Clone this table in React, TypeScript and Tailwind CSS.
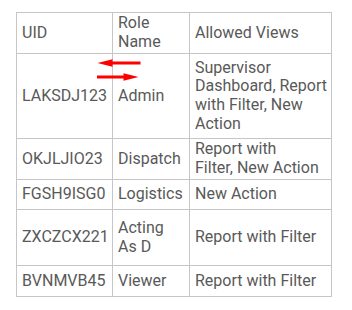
import React from "react";

type Row = {
  uid: string;
  role: string[];
  views: string[];
  h: string;
};

const rows: Row[] = [
  { uid: "UID", role: ["Role", "Name"], views: ["Allowed Views"], h: "h-[41px]" },
  {
    uid: "LAKSDJ123",
    role: ["Admin"],
    views: ["Supervisor", "Dashboard, Report", "with Filter, New", "Action"],
    h: "h-[85px]",
  },
  { uid: "OKJLJIO23", role: ["Dispatch"], views: ["Report with", "Filter, New Action"], h: "h-[41px]" },
  { uid: "FGSH9ISG0", role: ["Logistics"], views: ["New Action"], h: "h-[30px]" },
  { uid: "ZXCZCX221", role: ["Acting", "As D"], views: ["Report with Filter"], h: "h-[56px]" },
  { uid: "BVNMVB45", role: ["Viewer"], views: ["Report with Filter"], h: "h-[31px]" },
];

function Lines({ lines }: { lines: string[] }) {
  return (
    <div className="whitespace-nowrap">
      {lines.map((l, i) => (
        <div key={i}>{l}</div>
      ))}
    </div>
  );
}

function Cell({ children, w, h }: { children: React.ReactNode; w: string; h: string }) {
  return (
    <div
      className={`${w} ${h} flex items-center border-r border-b border-[#c6c6c6] pl-[5px] box-border overflow-hidden`}
    >
      {children}
    </div>
  );
}

function SwapArrows() {
  return (
    <svg
      className="absolute left-0 top-0 pointer-events-none"
      width="352"
      height="310"
      viewBox="0 0 352 310"
    >
      {/* left-pointing arrow */}
      <rect x="111" y="61.5" width="29.5" height="3" fill="#ff0000" />
      <polygon points="97.5,63 112.5,59.3 112.5,66.7" fill="#ff0000" />
      {/* right-pointing arrow */}
      <rect x="97" y="75.5" width="28" height="3" fill="#ff0000" />
      <polygon points="138.5,77 123.5,73.3 123.5,80.7" fill="#ff0000" />
    </svg>
  );
}

export default function App() {
  return (
    <div
      className="relative w-[352px] h-[310px] bg-white pt-[12px] pl-[16px] text-[16px] leading-[18.75px] text-[#595959]"
      style={{ fontFamily: "Roboto, 'Liberation Sans', sans-serif" }}
    >
      <div className="flex flex-col w-[316px] border-l border-t border-[#c6c6c6]">
        {rows.map((r) => (
          <div key={r.uid} className="flex">
            <Cell w="w-[96px]" h={r.h}>
              <Lines lines={[r.uid]} />
            </Cell>
            <Cell w="w-[77px]" h={r.h}>
              <Lines lines={r.role} />
            </Cell>
            <Cell w="w-[142px]" h={r.h}>
              <Lines lines={r.views} />
            </Cell>
          </div>
        ))}
      </div>
      <SwapArrows />
    </div>
  );
}
